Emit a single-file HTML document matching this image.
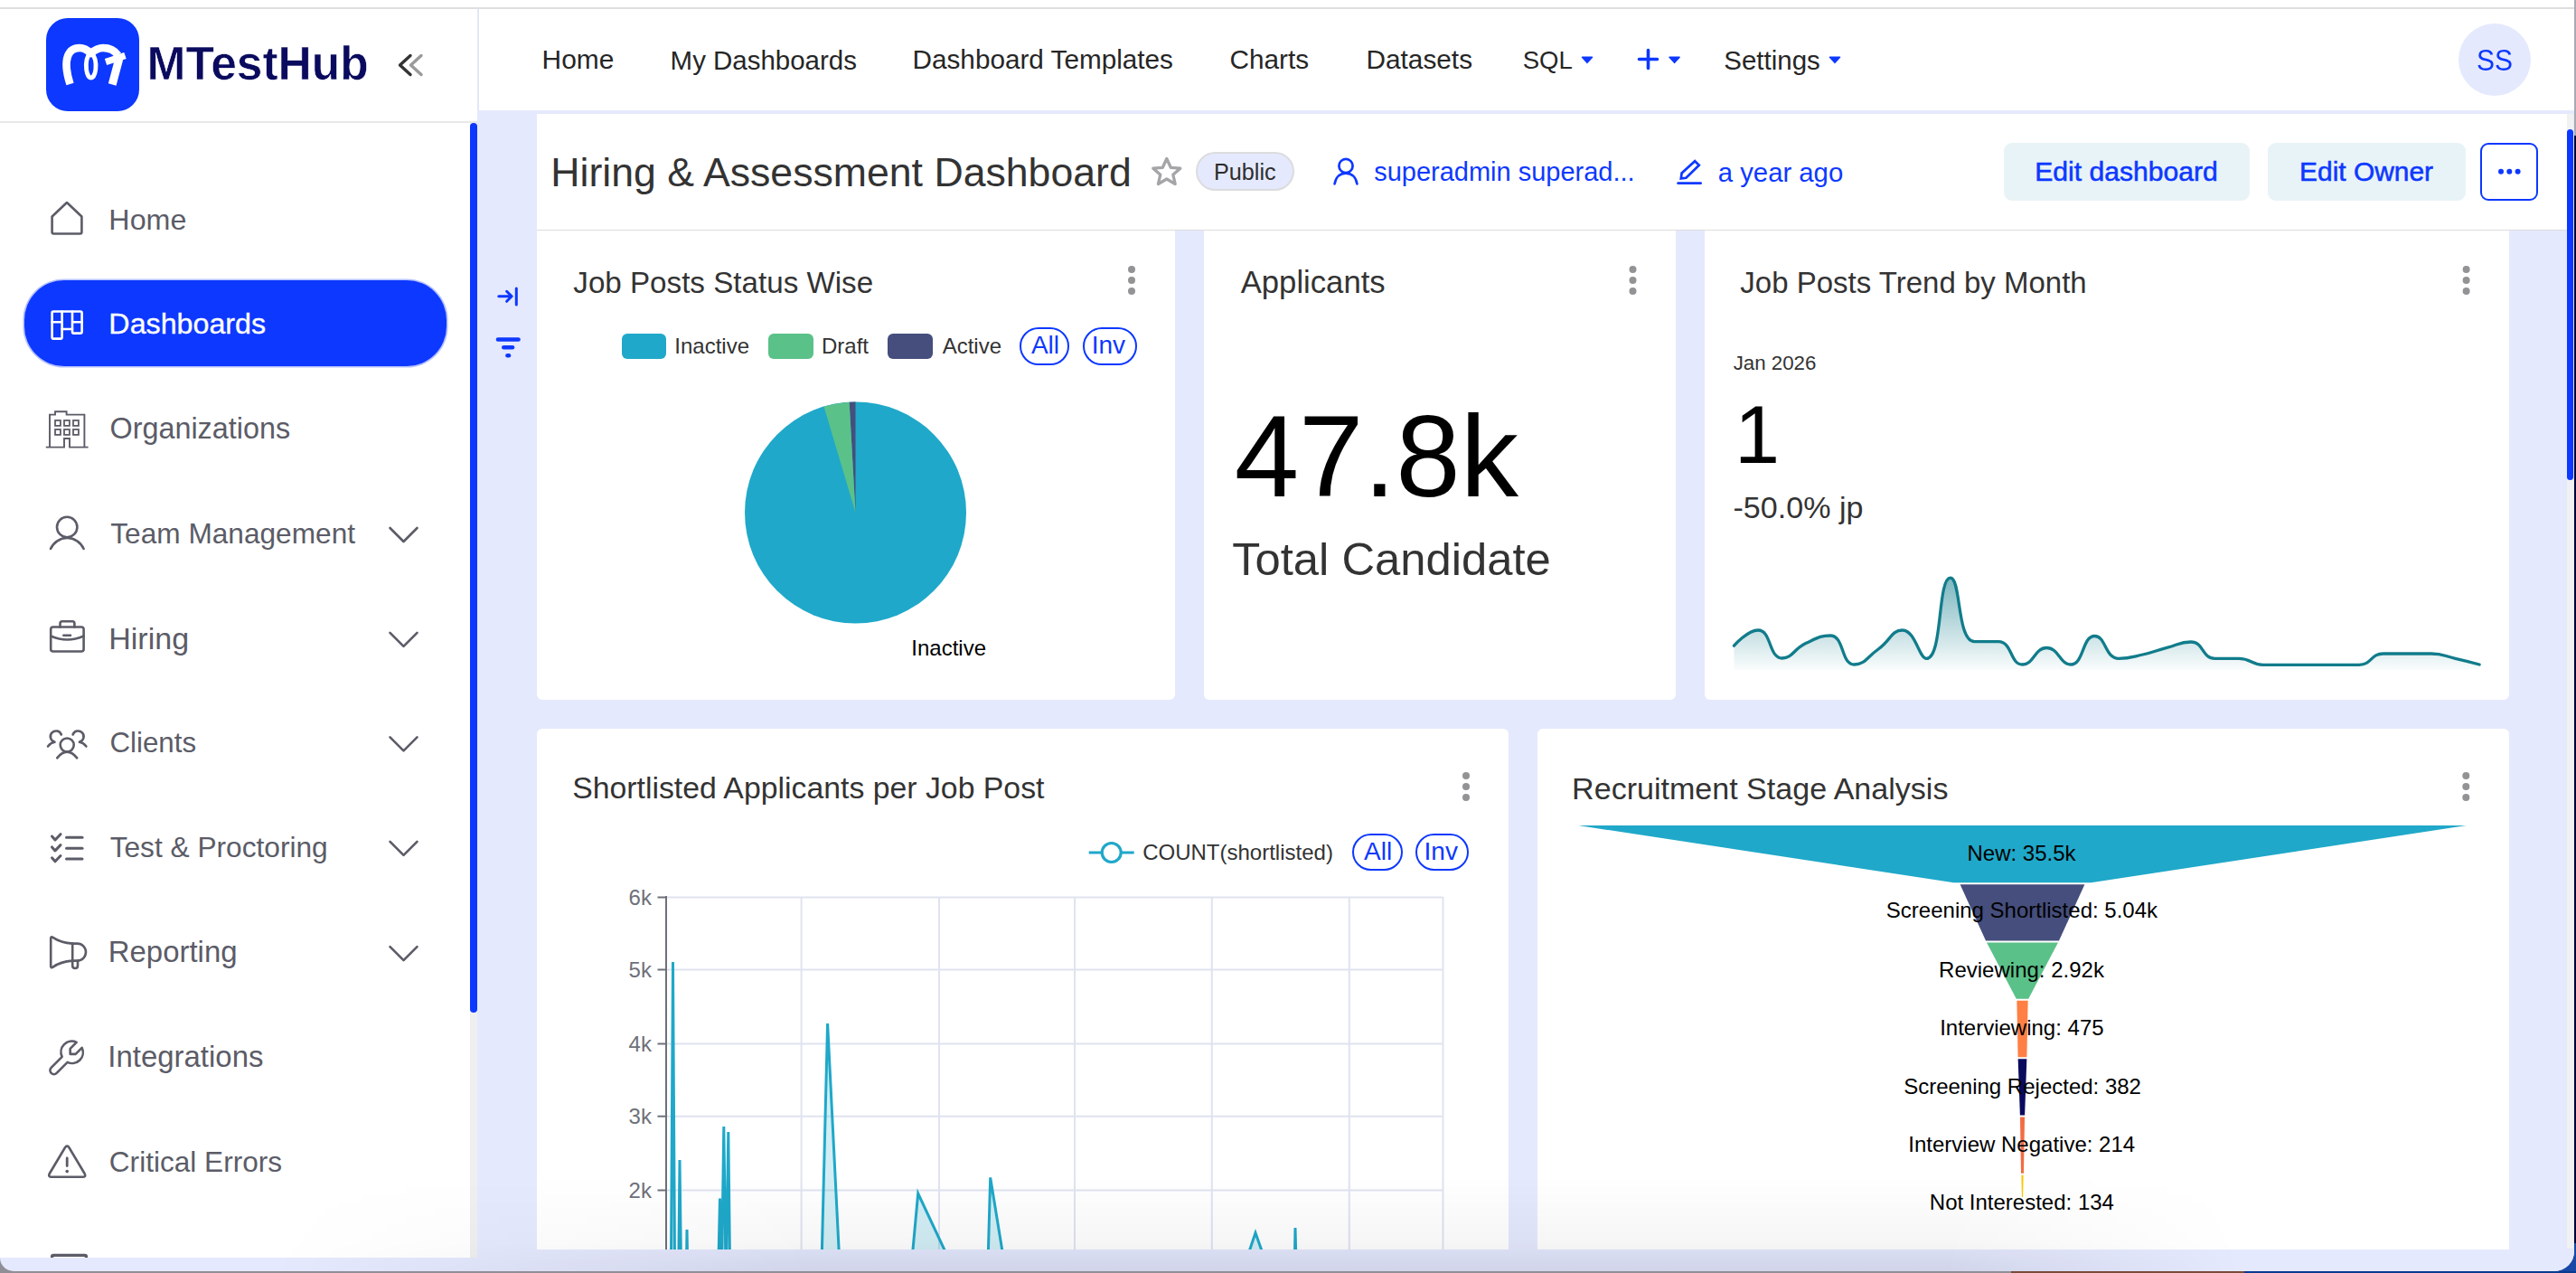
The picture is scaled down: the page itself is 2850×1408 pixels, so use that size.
<!DOCTYPE html>
<html><head><meta charset="utf-8"><style>
html,body{margin:0;padding:0;}
body{width:2850px;height:1408px;position:relative;overflow:hidden;background:#8f8f96;font-family:"Liberation Sans",sans-serif;}
.r{position:absolute;box-sizing:border-box;}
.t{position:absolute;white-space:pre;}
svg{position:absolute;left:0;top:0;}
</style></head><body>
<div class="r" style="left:2848px;top:0px;width:2px;height:150px;background:#a9a9b3;"></div>
<div class="r" style="left:2848px;top:150px;width:2px;height:1225px;background:#000033;"></div>
<div class="r" style="left:2800px;top:1375px;width:50px;height:33px;background:#1848a6;"></div>
<div class="r" style="left:0px;top:1406px;width:2850px;height:2px;background:#8f8f96;"></div>
<div class="r" style="left:0px;top:0px;width:2848px;height:1406px;background:#ffffff;border-radius:0 0 22px 22px;"></div>
<div class="r" style="left:528px;top:122px;width:2320px;height:1284px;background:#e5e9fd;border-radius:0 0 22px 0;"></div>
<div class="r" style="left:0px;top:1391px;width:600px;height:15px;background:#e5e9fd;border-radius:0 0 0 22px;"></div>
<div class="r" style="left:2225px;top:1406px;width:258px;height:2px;background:#7a4a3a;"></div>
<div class="r" style="left:2483px;top:1406px;width:367px;height:2px;background:#0a3a8f;"></div>
<div class="r" style="left:0px;top:8px;width:2848px;height:2px;background:#dedede;"></div>
<div class="r" style="left:530px;top:10px;width:2318px;height:112px;background:#ffffff;"></div>
<div class="r" style="left:528px;top:10px;width:2px;height:112px;background:#e2e6f8;"></div>
<div class="r" style="left:0px;top:10px;width:528px;height:1381px;background:#ffffff;"></div>
<div class="r" style="left:0px;top:134px;width:528px;height:2px;background:#e8e8e8;"></div>
<div class="r" style="left:520px;top:136px;width:8px;height:1255px;background:#efefef;"></div>
<div class="r" style="left:520px;top:136px;width:8px;height:984px;background:#0d38ff;border-radius:4px;"></div>
<div class="r" style="left:594px;top:126px;width:2246px;height:128px;background:#ffffff;"></div>
<div class="r" style="left:594px;top:254px;width:2246px;height:1px;background:#dcdcdc;"></div>
<div class="r" style="left:2840px;top:126px;width:7px;height:1255px;background:#f1f1f1;"></div>
<div class="r" style="left:2840px;top:143px;width:7px;height:388px;background:#0d38ff;border-radius:4px;"></div>
<div class="r" style="left:594px;top:255px;width:706px;height:519px;background:#fff;border-radius:0 0 6px 6px;"></div>
<div class="r" style="left:1332px;top:255px;width:522px;height:519px;background:#fff;border-radius:0 0 6px 6px;"></div>
<div class="r" style="left:1886px;top:255px;width:890px;height:519px;background:#fff;border-radius:0 0 6px 6px;"></div>
<div class="r" style="left:594px;top:806px;width:1075px;height:576px;background:#fff;border-radius:6px 6px 0 0;"></div>
<div class="r" style="left:1701px;top:806px;width:1075px;height:576px;background:#fff;border-radius:6px 6px 0 0;"></div>
<div class="r" style="left:51px;top:20px;width:103px;height:103px;background:#0d38ff;border-radius:24px;"></div>
<div class="r" style="left:27px;top:310px;width:466.5px;height:95px;background:#0d38ff;border-radius:44px;box-shadow:0 0 0 1.6px #b4c0ff;"></div>
<div class="r" style="left:2720px;top:26px;width:80px;height:80px;border-radius:40px;background:#e5e9fd"></div>
<div class="r" style="left:1323.4px;top:168.4px;width:109px;height:43px;border-radius:22px;background:#e5e9fd;border:2px solid #dcdcde"></div>
<div class="r" style="left:2217px;top:158px;width:272px;height:63.5px;background:#e8f3f7;border-radius:9px;"></div>
<div class="r" style="left:2509px;top:158px;width:219px;height:63.5px;background:#e8f3f7;border-radius:9px;"></div>
<div class="r" style="left:2744px;top:158px;width:63.6px;height:63.5px;border-radius:9px;border:2px solid #0d38ff"></div>
<div class="r" style="left:688px;top:369px;width:49px;height:28px;background:#1fa8c9;border-radius:6px;"></div>
<div class="r" style="left:850px;top:369px;width:50px;height:28px;background:#5ac189;border-radius:6px;"></div>
<div class="r" style="left:982px;top:369px;width:50px;height:28px;background:#454e7c;border-radius:6px;"></div>
<div class="r" style="left:1128px;top:362.4px;width:55.200000000000045px;height:41.80000000000001px;border-radius:20.900000000000006px;border:2px solid #0d38ff;box-sizing:border-box"></div>
<div class="r" style="left:1197.8px;top:362.4px;width:59.799999999999955px;height:41.80000000000001px;border-radius:20.900000000000006px;border:2px solid #0d38ff;box-sizing:border-box"></div>
<div class="r" style="left:1496px;top:922.4px;width:55.5px;height:41.0px;border-radius:20.5px;border:2px solid #0d38ff;box-sizing:border-box"></div>
<div class="r" style="left:1565.6px;top:922.4px;width:59.80000000000018px;height:41.0px;border-radius:20.5px;border:2px solid #0d38ff;box-sizing:border-box"></div>
<svg width="2850" height="1408" viewBox="0 0 2850 1408">
<path d="M431.5,584.0 L446.5,599.0 L461.5,584.0" stroke="#5b5c67" stroke-width="2.6" fill="none" stroke-linecap="round" stroke-linejoin="round"/>
<path d="M431.5,699.9 L446.5,714.9 L461.5,699.9" stroke="#5b5c67" stroke-width="2.6" fill="none" stroke-linecap="round" stroke-linejoin="round"/>
<path d="M431.5,815.3 L446.5,830.3 L461.5,815.3" stroke="#5b5c67" stroke-width="2.6" fill="none" stroke-linecap="round" stroke-linejoin="round"/>
<path d="M431.5,930.9 L446.5,945.9 L461.5,930.9" stroke="#5b5c67" stroke-width="2.6" fill="none" stroke-linecap="round" stroke-linejoin="round"/>
<path d="M431.5,1047.1 L446.5,1062.1 L461.5,1047.1" stroke="#5b5c67" stroke-width="2.6" fill="none" stroke-linecap="round" stroke-linejoin="round"/>
<circle cx="1252" cy="298" r="4.0" fill="#939396"/>
<circle cx="1252" cy="310" r="4.0" fill="#939396"/>
<circle cx="1252" cy="322" r="4.0" fill="#939396"/>
<circle cx="1806.5" cy="298" r="4.0" fill="#939396"/>
<circle cx="1806.5" cy="310" r="4.0" fill="#939396"/>
<circle cx="1806.5" cy="322" r="4.0" fill="#939396"/>
<circle cx="2728.6" cy="298" r="4.0" fill="#939396"/>
<circle cx="2728.6" cy="310" r="4.0" fill="#939396"/>
<circle cx="2728.6" cy="322" r="4.0" fill="#939396"/>
<circle cx="1622" cy="858" r="4.0" fill="#939396"/>
<circle cx="1622" cy="870" r="4.0" fill="#939396"/>
<circle cx="1622" cy="882" r="4.0" fill="#939396"/>
<circle cx="2728.3" cy="858" r="4.0" fill="#939396"/>
<circle cx="2728.3" cy="870" r="4.0" fill="#939396"/>
<circle cx="2728.3" cy="882" r="4.0" fill="#939396"/>
<circle cx="946.5" cy="567" r="122.5" fill="#1fa8c9"/>
<path d="M946.5,567 L939.66,444.69 A122.5,122.5 0 0 1 946.50,444.50 Z" fill="#454e7c"/>
<path d="M946.5,567 L911.50,449.61 A122.5,122.5 0 0 1 939.66,444.69 Z" fill="#5ac189"/>
<defs><linearGradient id="tg" x1="0" y1="639" x2="0" y2="741" gradientUnits="userSpaceOnUse"><stop offset="0" stop-color="#117c8b" stop-opacity="0.55"/><stop offset="1" stop-color="#117c8b" stop-opacity="0.02"/></linearGradient></defs>
<path d="M1918.50,714.20 C1918.50,714.20 1933.48,697.00 1945.10,697.00 C1960.08,697.00 1956.66,728.00 1971.70,728.00 C1983.26,728.00 1984.21,717.92 1998.30,711.30 C2010.81,705.42 2014.23,703.00 2024.90,703.00 C2040.83,703.00 2036.37,735.00 2051.50,735.00 C2062.97,735.00 2065.27,727.16 2078.10,718.00 C2091.87,708.16 2092.69,697.00 2104.70,697.00 C2119.29,697.00 2123.15,728.40 2131.30,728.40 C2149.75,728.40 2143.20,639.20 2157.90,639.20 C2169.80,639.20 2164.84,709.70 2184.50,709.70 C2191.44,709.70 2199.92,709.70 2211.10,709.70 C2226.52,709.70 2223.57,735.00 2237.70,735.00 C2250.17,735.00 2251.00,716.50 2264.30,716.50 C2277.60,716.50 2279.19,735.00 2290.90,735.00 C2305.79,735.00 2303.37,703.50 2317.50,703.50 C2329.97,703.50 2328.82,728.30 2344.10,728.30 C2355.42,728.30 2357.58,726.94 2370.70,724.00 C2384.18,720.99 2383.93,719.92 2397.30,716.40 C2410.53,712.92 2411.70,710.00 2423.90,710.00 C2438.30,710.00 2435.92,728.30 2450.50,728.30 C2462.52,728.30 2464.02,728.30 2477.10,728.30 C2490.62,728.30 2490.18,735.30 2503.70,735.30 C2516.78,735.30 2517.00,735.30 2530.30,735.30 C2543.60,735.30 2543.60,735.30 2556.90,735.30 C2570.20,735.30 2570.20,735.30 2583.50,735.30 C2596.80,735.30 2597.44,735.30 2610.10,735.30 C2624.04,735.30 2622.76,723.00 2636.70,723.00 C2649.36,723.00 2650.00,723.00 2663.30,723.00 C2676.60,723.00 2676.73,723.00 2689.90,723.00 C2703.33,723.00 2703.28,725.32 2716.50,728.30 C2729.88,731.32 2743.10,735.00 2743.10,735.00 L2743.1,741 L1918.5,741 Z" fill="url(#tg)"/>
<path d="M1918.50,714.20 C1918.50,714.20 1933.48,697.00 1945.10,697.00 C1960.08,697.00 1956.66,728.00 1971.70,728.00 C1983.26,728.00 1984.21,717.92 1998.30,711.30 C2010.81,705.42 2014.23,703.00 2024.90,703.00 C2040.83,703.00 2036.37,735.00 2051.50,735.00 C2062.97,735.00 2065.27,727.16 2078.10,718.00 C2091.87,708.16 2092.69,697.00 2104.70,697.00 C2119.29,697.00 2123.15,728.40 2131.30,728.40 C2149.75,728.40 2143.20,639.20 2157.90,639.20 C2169.80,639.20 2164.84,709.70 2184.50,709.70 C2191.44,709.70 2199.92,709.70 2211.10,709.70 C2226.52,709.70 2223.57,735.00 2237.70,735.00 C2250.17,735.00 2251.00,716.50 2264.30,716.50 C2277.60,716.50 2279.19,735.00 2290.90,735.00 C2305.79,735.00 2303.37,703.50 2317.50,703.50 C2329.97,703.50 2328.82,728.30 2344.10,728.30 C2355.42,728.30 2357.58,726.94 2370.70,724.00 C2384.18,720.99 2383.93,719.92 2397.30,716.40 C2410.53,712.92 2411.70,710.00 2423.90,710.00 C2438.30,710.00 2435.92,728.30 2450.50,728.30 C2462.52,728.30 2464.02,728.30 2477.10,728.30 C2490.62,728.30 2490.18,735.30 2503.70,735.30 C2516.78,735.30 2517.00,735.30 2530.30,735.30 C2543.60,735.30 2543.60,735.30 2556.90,735.30 C2570.20,735.30 2570.20,735.30 2583.50,735.30 C2596.80,735.30 2597.44,735.30 2610.10,735.30 C2624.04,735.30 2622.76,723.00 2636.70,723.00 C2649.36,723.00 2650.00,723.00 2663.30,723.00 C2676.60,723.00 2676.73,723.00 2689.90,723.00 C2703.33,723.00 2703.28,725.32 2716.50,728.30 C2729.88,731.32 2743.10,735.00 2743.10,735.00" stroke="#117c8b" stroke-width="3.3" fill="none" stroke-linejoin="round" stroke-linecap="round"/>
<path d="M1204.7,943 H1254.7" stroke="#1fa8c9" stroke-width="3"/>
<circle cx="1229.7" cy="943" r="10.5" stroke="#1fa8c9" stroke-width="3.2" fill="#fff"/>
<path d="M737,992.5 H1596.5" stroke="#e0e3f0" stroke-width="2"/>
<path d="M727.5,992.5 H737" stroke="#6e7079" stroke-width="2"/>
<path d="M737,1072.5 H1596.5" stroke="#e0e3f0" stroke-width="2"/>
<path d="M727.5,1072.5 H737" stroke="#6e7079" stroke-width="2"/>
<path d="M737,1154.5 H1596.5" stroke="#e0e3f0" stroke-width="2"/>
<path d="M727.5,1154.5 H737" stroke="#6e7079" stroke-width="2"/>
<path d="M737,1234.7 H1596.5" stroke="#e0e3f0" stroke-width="2"/>
<path d="M727.5,1234.7 H737" stroke="#6e7079" stroke-width="2"/>
<path d="M737,1316.5 H1596.5" stroke="#e0e3f0" stroke-width="2"/>
<path d="M727.5,1316.5 H737" stroke="#6e7079" stroke-width="2"/>
<path d="M886.6,992 V1382" stroke="#e0e3f0" stroke-width="2"/>
<path d="M1039,992 V1382" stroke="#e0e3f0" stroke-width="2"/>
<path d="M1189,992 V1382" stroke="#e0e3f0" stroke-width="2"/>
<path d="M1340.8,992 V1382" stroke="#e0e3f0" stroke-width="2"/>
<path d="M1492.8,992 V1382" stroke="#e0e3f0" stroke-width="2"/>
<path d="M1596.5,992 V1382" stroke="#e0e3f0" stroke-width="2"/>
<path d="M737,991 V1382" stroke="#6e7079" stroke-width="2"/>
<clipPath id="cc"><rect x="737" y="900" width="860" height="482"/></clipPath>
<path d="M737,1480 L742,1480 L744.5,1064 L747,1480 L750,1480 L752,1283 L754.5,1480 L758.5,1480 L760,1360 L762,1480 L793,1480 L796.5,1325.6 L798.3,1420 L800.8,1246 L803.2,1420 L805.8,1252 L808.5,1480 L907,1480 L915.6,1132 L933,1480 L1001,1480 L1015.7,1320 L1090.7,1480 L1095.7,1302.4 L1124.6,1480 L1350,1480 L1389,1363.5 L1430,1480 L1431,1480 L1433,1358 L1436,1480 L1596,1480 Z" fill="#1fa8c9" fill-opacity="0.2" clip-path="url(#cc)"/>
<path d="M737,1480 L742,1480 L744.5,1064 L747,1480 L750,1480 L752,1283 L754.5,1480 L758.5,1480 L760,1360 L762,1480 L793,1480 L796.5,1325.6 L798.3,1420 L800.8,1246 L803.2,1420 L805.8,1252 L808.5,1480 L907,1480 L915.6,1132 L933,1480 L1001,1480 L1015.7,1320 L1090.7,1480 L1095.7,1302.4 L1124.6,1480 L1350,1480 L1389,1363.5 L1430,1480 L1431,1480 L1433,1358 L1436,1480 L1596,1480" stroke="#1fa8c9" stroke-width="3" fill="none" stroke-linejoin="miter" clip-path="url(#cc)"/>
<path d="M1746.25,913.00 L2728.75,913.00 L2313.40,976.29 L2161.60,976.29 Z" fill="#1fa8c9"/>
<path d="M2168.61,978.29 L2306.39,978.29 L2277.96,1040.57 L2197.04,1040.57 Z" fill="#454e7c"/>
<path d="M2198.02,1042.57 L2276.98,1042.57 L2244.20,1104.86 L2230.80,1104.86 Z" fill="#5ac189"/>
<path d="M2231.35,1106.86 L2243.65,1106.86 L2242.41,1169.14 L2232.59,1169.14 Z" fill="#ff7f44"/>
<path d="M2232.65,1171.14 L2242.35,1171.14 L2240.10,1233.43 L2234.90,1233.43 Z" fill="#0b0b5e"/>
<path d="M2234.96,1235.43 L2240.04,1235.43 L2238.97,1297.71 L2236.03,1297.71 Z" fill="#f26c43"/>
<path d="M2236.40,1299.71 L2238.60,1299.71 L2238.10,1324.00 L2236.90,1324.00 Z" fill="#fcc700"/>
<path d="M57.6,239.5 L74,224 L90.4,239.5 V256.8 Q90.4,258.5 88.7,258.5 H59.3 Q57.6,258.5 57.6,256.8 Z" stroke="#5b5c67" stroke-width="2.6" fill="none" stroke-linecap="round" stroke-linejoin="round" />
<path d="M57.6,346 Q57.6,344.5 59,344.5 H89 Q90.6,344.5 90.6,346 V367 Q90.6,368.6 89,368.6 H81.5 Q80,368.6 80,367 V364 H68.6 V373 Q68.6,374.6 67,374.6 H59 Q57.6,374.6 57.6,373 Z" stroke="#ffffff" stroke-width="2.6" fill="none" stroke-linecap="round" stroke-linejoin="round" />
<path d="M68.6,344.5 V364 M80,344.5 V364 M57.6,356.3 H68.6 M80,356.3 H90.6" stroke="#ffffff" stroke-width="2.6" fill="none" stroke-linecap="round" stroke-linejoin="round" />
<path d="M50.8,494.6 H71 V485 H77 V494.6 H97.6 M55,494.6 V458.6 H61 V455.3 H73.6 V458.6 H93.4 V494.6" stroke="#5b5c67" stroke-width="1.9" fill="none" stroke-linecap="butt" stroke-linejoin="miter"/>
<rect x="61" y="465" width="5.9" height="5.9" stroke="#5b5c67" stroke-width="1.8" fill="none"/>
<rect x="61" y="475" width="5.9" height="5.9" stroke="#5b5c67" stroke-width="1.8" fill="none"/>
<rect x="71" y="465" width="5.9" height="5.9" stroke="#5b5c67" stroke-width="1.8" fill="none"/>
<rect x="71" y="475" width="5.9" height="5.9" stroke="#5b5c67" stroke-width="1.8" fill="none"/>
<rect x="81" y="465" width="5.9" height="5.9" stroke="#5b5c67" stroke-width="1.8" fill="none"/>
<rect x="81" y="475" width="5.9" height="5.9" stroke="#5b5c67" stroke-width="1.8" fill="none"/>
<circle cx="74.2" cy="583" r="11.2" stroke="#5b5c67" stroke-width="2.6" fill="none"/>
<path d="M56,607 A20,20 0 0 1 92.6,607" stroke="#5b5c67" stroke-width="2.6" fill="none" stroke-linecap="round" stroke-linejoin="round" />
<path d="M56.2,696 Q56.2,693.5 58.7,693.5 H90 Q92.6,693.5 92.6,696 V718 Q92.6,720.5 90,720.5 H58.7 Q56.2,720.5 56.2,718 Z" stroke="#5b5c67" stroke-width="2.6" fill="none" stroke-linecap="round" stroke-linejoin="round" />
<path d="M66.5,693.5 V689.5 Q66.5,687.3 68.7,687.3 H80.2 Q82.4,687.3 82.4,689.5 V693.5" stroke="#5b5c67" stroke-width="2.6" fill="none" stroke-linecap="round" stroke-linejoin="round" />
<path d="M56.2,703.5 Q74.4,711.5 92.6,703.5" stroke="#5b5c67" stroke-width="2.6" fill="none" stroke-linecap="round" stroke-linejoin="round" />
<path d="M70.3,702.8 H78" stroke="#5b5c67" stroke-width="2.6" fill="none" stroke-linecap="round" stroke-linejoin="round" />
<circle cx="74.2" cy="824" r="7.5" stroke="#5b5c67" stroke-width="2.6" fill="none"/>
<path d="M63.2,838.3 Q74.2,825 85.2,838.3" stroke="#5b5c67" stroke-width="2.6" fill="none" stroke-linecap="round" stroke-linejoin="round" />
<path d="M67.8,812.5 A6.2,6.2 0 1 0 60.2,820.6 M53,825.5 Q56.5,821.3 60.5,820.8" stroke="#5b5c67" stroke-width="2.6" fill="none" stroke-linecap="round" stroke-linejoin="round" />
<path d="M80.6,812.5 A6.2,6.2 0 1 1 88.2,820.6 M95.4,825.5 Q91.9,821.3 87.9,820.8" stroke="#5b5c67" stroke-width="2.6" fill="none" stroke-linecap="round" stroke-linejoin="round" />
<path d="M57.5,925.0 L61,929.0 L67,922.6999999999999" stroke="#5b5c67" stroke-width="3.0" fill="none" stroke-linecap="round" stroke-linejoin="round" />
<path d="M73.5,926.3 H91" stroke="#5b5c67" stroke-width="3.0" fill="none" stroke-linecap="round" stroke-linejoin="round" />
<path d="M57.5,936.9000000000001 L61,940.9000000000001 L67,934.6" stroke="#5b5c67" stroke-width="3.0" fill="none" stroke-linecap="round" stroke-linejoin="round" />
<path d="M73.5,938.2 H91" stroke="#5b5c67" stroke-width="3.0" fill="none" stroke-linecap="round" stroke-linejoin="round" />
<path d="M57.5,948.8000000000001 L61,952.8000000000001 L67,946.5" stroke="#5b5c67" stroke-width="3.0" fill="none" stroke-linecap="round" stroke-linejoin="round" />
<path d="M73.5,950.1 H91" stroke="#5b5c67" stroke-width="3.0" fill="none" stroke-linecap="round" stroke-linejoin="round" />
<path d="M56.2,1038 Q56.2,1035.5 58.5,1036.8 Q67,1042.5 80.2,1043.6 H85.5 A9.5,9.5 0 0 1 85.5,1062.6 H80.2 Q67,1063.5 58.5,1069.6 Q56.2,1071 56.2,1068.4 Z" stroke="#5b5c67" stroke-width="2.6" fill="none" stroke-linecap="round" stroke-linejoin="round" />
<path d="M80.2,1043.6 V1062.6 M80.2,1062.6 V1068 Q80.2,1071 83.2,1071 Q86,1071 86,1068 V1062.6" stroke="#5b5c67" stroke-width="2.6" fill="none" stroke-linecap="round" stroke-linejoin="round" />
<g transform="translate(97.66,1145.84) scale(-2.0,2.0)"><path d="M7 10h3v-3l-3.5 -3.5a6 6 0 0 1 8 8l6 6a2 2 0 0 1 -3 3l-6 -6a6 6 0 0 1 -8 -8l3.5 3.5" stroke="#5b5c67" stroke-width="1.3" fill="none" stroke-linecap="round" stroke-linejoin="round"/></g>
<path d="M71.8,1269.5 Q74.2,1265.8 76.6,1269.5 L93.6,1298 Q95.5,1301.8 91.5,1301.8 H57 Q53,1301.8 54.8,1298 Z" stroke="#5b5c67" stroke-width="2.6" fill="none" stroke-linecap="round" stroke-linejoin="round" />
<path d="M74.2,1281 V1289.5" stroke="#5b5c67" stroke-width="2.8" fill="none" stroke-linecap="round" stroke-linejoin="round" />
<circle cx="74.2" cy="1295.6" r="1.8" fill="#5b5c67"/>
<clipPath id="sbc"><rect x="0" y="1300" width="528" height="91"/></clipPath>
<path d="M57.6,1396 V1390 Q57.6,1388.4 59.2,1388.4 H93.8 Q95.4,1388.4 95.4,1390 V1396" stroke="#5b5c67" stroke-width="3.4" fill="none" stroke-linecap="round" stroke-linejoin="round" clip-path="url(#sbc)"/>
<path d="M454,61.5 L442.5,72 L454,82.5" stroke="#333333" stroke-width="3.4" fill="none" stroke-linecap="round" stroke-linejoin="round" />
<path d="M466,61.5 L454.5,72 L466,82.5" stroke="#9a9a9a" stroke-width="3.4" fill="none" stroke-linecap="round" stroke-linejoin="round" />
<path d="M77.5,93 C74,82 72,70 75,62 C78,54 84,53 88,53 C94,53 97.5,56 100.5,59 C104,56 108,53 114,53 C121,53 127,56 130.5,61" stroke="#fff" stroke-width="8.6" fill="none" stroke-linecap="butt" stroke-linejoin="round"/>
<path d="M100.5,57.5 C96.2,62 94.8,70 95.6,77 C96.4,83 98.8,86 100.7,86 C102.6,86 105,83 105.8,77 C106.6,70 105,62 100.5,57.5 Z" stroke="#fff" stroke-width="4.8" fill="none"/>
<path d="M117,68.5 L138.5,61.5" stroke="#fff" stroke-width="7.5" fill="none"/>
<path d="M131.8,65 L124.2,93.5" stroke="#fff" stroke-width="9" fill="none"/>
<path d="M1750.5,63.3 H1761.5 L1756,69.3 Z" fill="#0d38ff" stroke="#0d38ff" stroke-width="1.6" stroke-linejoin="round"/>
<path d="M1847.1,63.3 H1858.1 L1852.6,69.3 Z" fill="#0d38ff" stroke="#0d38ff" stroke-width="1.6" stroke-linejoin="round"/>
<path d="M2024.5,63.3 H2035.5 L2030,69.3 Z" fill="#0d38ff" stroke="#0d38ff" stroke-width="1.6" stroke-linejoin="round"/>
<path d="M1823.5,55.5 V75.5 M1813.5,65.5 H1833.5" stroke="#0d38ff" stroke-width="3.6" fill="none" stroke-linecap="round" stroke-linejoin="round" />
<path d="M1290.8,175.5 L1295.3,185.3 L1305.8,186.2 L1297.8,193.2 L1300.2,203.5 L1290.8,198 L1281.4,203.5 L1283.8,193.2 L1275.8,186.2 L1286.3,185.3 Z" stroke="#a5a5a8" stroke-width="3.3" fill="none" stroke-linejoin="round"/>
<circle cx="1489" cy="183.5" r="7.6" stroke="#0d38ff" stroke-width="2.7" fill="none"/>
<path d="M1476.6,203.4 C1478,195 1483.5,191.6 1489,191.6 C1494.5,191.6 1500,195 1501.4,203.4" stroke="#0d38ff" stroke-width="2.7" fill="none" stroke-linecap="round" stroke-linejoin="round" />
<path d="M1875.2,178.2 L1879.8,182.8 L1865.4,196.8 L1859.8,197.4 L1860.6,191.4 Z" stroke="#0d38ff" stroke-width="2.7" fill="none" stroke-linejoin="miter"/>
<path d="M1856.6,202.7 H1881.6" stroke="#0d38ff" stroke-width="2.8" fill="none" stroke-linecap="round" stroke-linejoin="round" />
<path d="M551.8,327.8 H566 M560.6,322.3 L566.2,327.8 L560.6,333.3 M571.3,319 V337" stroke="#0d38ff" stroke-width="3.0" fill="none" stroke-linecap="round" stroke-linejoin="round" />
<path d="M551,375.5 H573.5" stroke="#0d38ff" stroke-width="4.6" fill="none" stroke-linecap="round" stroke-linejoin="round" />
<path d="M557.3,384.3 H567" stroke="#0d38ff" stroke-width="4.6" fill="none" stroke-linecap="round" stroke-linejoin="round" />
<path d="M561.5,393.2 H563" stroke="#0d38ff" stroke-width="4.6" fill="none" stroke-linecap="round" stroke-linejoin="round" />
<circle cx="2767" cy="189.8" r="3" fill="#0d38ff"/>
<circle cx="2776.3" cy="189.8" r="3" fill="#0d38ff"/>
<circle cx="2785.6" cy="189.8" r="3" fill="#0d38ff"/>
</svg>
<div class="t" style="left:162.60px;top:45.16px;font-size:51.53px;line-height:51.53px;font-weight:700;color:#0a0a5e;-webkit-text-stroke:0.6px #ffffff;">MTestHub</div>
<div class="t" style="left:120.35px;top:226.67px;font-size:32.27px;line-height:32.27px;font-weight:400;color:#5b5c67;">Home</div>
<div class="t" style="left:120.36px;top:341.70px;font-size:32.23px;line-height:32.23px;font-weight:400;color:#ffffff;-webkit-text-stroke:0.35px #ffffff;">Dashboards</div>
<div class="t" style="left:121.48px;top:458.19px;font-size:32.36px;line-height:32.36px;font-weight:400;color:#5b5c67;">Organizations</div>
<div class="t" style="left:122.30px;top:574.71px;font-size:31.63px;line-height:31.63px;font-weight:400;color:#5b5c67;">Team Management</div>
<div class="t" style="left:120.21px;top:688.55px;font-size:34.06px;line-height:34.06px;font-weight:400;color:#5b5c67;">Hiring</div>
<div class="t" style="left:121.43px;top:806.29px;font-size:31.30px;line-height:31.30px;font-weight:400;color:#5b5c67;">Clients</div>
<div class="t" style="left:121.70px;top:921.58px;font-size:31.67px;line-height:31.67px;font-weight:400;color:#5b5c67;">Test &amp; Proctoring</div>
<div class="t" style="left:119.70px;top:1036.68px;font-size:32.96px;line-height:32.96px;font-weight:400;color:#5b5c67;">Reporting</div>
<div class="t" style="left:119.37px;top:1152.80px;font-size:32.93px;line-height:32.93px;font-weight:400;color:#5b5c67;">Integrations</div>
<div class="t" style="left:120.82px;top:1270.04px;font-size:31.59px;line-height:31.59px;font-weight:400;color:#5b5c67;">Critical Errors</div>
<div class="t" style="left:599.55px;top:51.17px;font-size:29.91px;line-height:29.91px;font-weight:400;color:#262626;">Home</div>
<div class="t" style="left:741.58px;top:51.53px;font-size:29.48px;line-height:29.48px;font-weight:400;color:#262626;">My Dashboards</div>
<div class="t" style="left:1009.56px;top:51.33px;font-size:29.71px;line-height:29.71px;font-weight:400;color:#262626;">Dashboard Templates</div>
<div class="t" style="left:1360.51px;top:51.32px;font-size:29.73px;line-height:29.73px;font-weight:400;color:#262626;">Charts</div>
<div class="t" style="left:1511.56px;top:51.28px;font-size:29.78px;line-height:29.78px;font-weight:400;color:#262626;">Datasets</div>
<div class="t" style="left:1684.76px;top:53.16px;font-size:27.56px;line-height:27.56px;font-weight:400;color:#262626;">SQL</div>
<div class="t" style="left:1907.37px;top:51.56px;font-size:29.45px;line-height:29.45px;font-weight:400;color:#262626;">Settings</div>
<div class="t" style="left:2739.99px;top:52.59px;font-size:30.00px;line-height:30.00px;font-weight:400;color:#0d38ff;transform:scaleY(1.1);transform-origin:0 25.41px;">SS</div>
<div class="t" style="left:609.34px;top:168.79px;font-size:44.63px;line-height:44.63px;font-weight:400;color:#333333;">Hiring &amp; Assessment Dashboard</div>
<div class="t" style="left:1342.93px;top:178.03px;font-size:25.23px;line-height:25.23px;font-weight:400;color:#2e2e2e;">Public</div>
<div class="t" style="left:1520.22px;top:176.25px;font-size:28.99px;line-height:28.99px;font-weight:400;color:#0d38ff;">superadmin superad...</div>
<div class="t" style="left:1900.77px;top:175.98px;font-size:29.30px;line-height:29.30px;font-weight:400;color:#0d38ff;">a year ago</div>
<div class="t" style="left:2251.23px;top:174.50px;font-size:30.10px;line-height:30.10px;font-weight:400;color:#0d38ff;-webkit-text-stroke:0.55px #0d38ff;">Edit dashboard</div>
<div class="t" style="left:2544.05px;top:174.67px;font-size:29.91px;line-height:29.91px;font-weight:400;color:#0d38ff;-webkit-text-stroke:0.55px #0d38ff;">Edit Owner</div>
<div class="t" style="left:634.30px;top:295.89px;font-size:33.18px;line-height:33.18px;font-weight:400;color:#333333;">Job Posts Status Wise</div>
<div class="t" style="left:1372.73px;top:294.84px;font-size:34.66px;line-height:34.66px;font-weight:400;color:#333333;">Applicants</div>
<div class="t" style="left:1925.30px;top:296.24px;font-size:33.01px;line-height:33.01px;font-weight:400;color:#333333;">Job Posts Trend by Month</div>
<div class="t" style="left:633.18px;top:855.37px;font-size:33.80px;line-height:33.80px;font-weight:400;color:#333333;">Shortlisted Applicants per Job Post</div>
<div class="t" style="left:1739.11px;top:854.96px;font-size:34.05px;line-height:34.05px;font-weight:400;color:#333333;">Recruitment Stage Analysis</div>
<div class="t" style="left:746.29px;top:371.17px;font-size:24.00px;line-height:24.00px;font-weight:400;color:#333333;">Inactive</div>
<div class="t" style="left:909.03px;top:371.17px;font-size:24.00px;line-height:24.00px;font-weight:400;color:#333333;">Draft</div>
<div class="t" style="left:1042.65px;top:371.17px;font-size:24.00px;line-height:24.00px;font-weight:400;color:#333333;">Active</div>
<div class="t" style="left:1140.94px;top:368.18px;font-size:28.00px;line-height:28.00px;font-weight:400;color:#0d38ff;">All</div>
<div class="t" style="left:1207.78px;top:368.18px;font-size:28.00px;line-height:28.00px;font-weight:400;color:#0d38ff;">Inv</div>
<div class="t" style="left:1008.29px;top:704.67px;font-size:24.00px;line-height:24.00px;font-weight:400;color:#000000;">Inactive</div>
<div class="t" style="left:1365.67px;top:440.97px;font-size:128.48px;line-height:128.48px;font-weight:400;color:#000000;">47.8k</div>
<div class="t" style="left:1363.18px;top:593.80px;font-size:50.76px;line-height:50.76px;font-weight:400;color:#333333;">Total Candidate</div>
<div class="t" style="left:1917.67px;top:391.41px;font-size:22.31px;line-height:22.31px;font-weight:400;color:#333333;">Jan 2026</div>
<div class="t" style="left:1918.96px;top:435.77px;font-size:90.00px;line-height:90.00px;font-weight:400;color:#000000;">1</div>
<div class="t" style="left:1917.50px;top:544.35px;font-size:34.07px;line-height:34.07px;font-weight:400;color:#333333;">-50.0% jp</div>
<div class="t" style="left:1264.20px;top:931.17px;font-size:24.00px;line-height:24.00px;font-weight:400;color:#333333;">COUNT(shortlisted)</div>
<div class="t" style="left:1509.09px;top:928.18px;font-size:28.00px;line-height:28.00px;font-weight:400;color:#0d38ff;">All</div>
<div class="t" style="left:1575.58px;top:928.18px;font-size:28.00px;line-height:28.00px;font-weight:400;color:#0d38ff;">Inv</div>
<div class="t" style="left:695.61px;top:980.67px;font-size:24.00px;line-height:24.00px;font-weight:400;color:#6e7079;">6k</div>
<div class="t" style="left:695.61px;top:1060.67px;font-size:24.00px;line-height:24.00px;font-weight:400;color:#6e7079;">5k</div>
<div class="t" style="left:695.61px;top:1142.67px;font-size:24.00px;line-height:24.00px;font-weight:400;color:#6e7079;">4k</div>
<div class="t" style="left:695.61px;top:1222.87px;font-size:24.00px;line-height:24.00px;font-weight:400;color:#6e7079;">3k</div>
<div class="t" style="left:695.61px;top:1304.67px;font-size:24.00px;line-height:24.00px;font-weight:400;color:#6e7079;">2k</div>
<div class="t" style="left:2176.47px;top:932.07px;font-size:24.00px;line-height:24.00px;font-weight:400;color:#000000;">New: 35.5k</div>
<div class="t" style="left:2086.85px;top:995.37px;font-size:24.00px;line-height:24.00px;font-weight:400;color:#000000;">Screening Shortlisted: 5.04k</div>
<div class="t" style="left:2145.11px;top:1060.57px;font-size:24.00px;line-height:24.00px;font-weight:400;color:#000000;">Reviewing: 2.92k</div>
<div class="t" style="left:2146.17px;top:1125.37px;font-size:24.00px;line-height:24.00px;font-weight:400;color:#000000;">Interviewing: 475</div>
<div class="t" style="left:2106.14px;top:1189.87px;font-size:24.00px;line-height:24.00px;font-weight:400;color:#000000;">Screening Rejected: 382</div>
<div class="t" style="left:2111.34px;top:1253.87px;font-size:24.00px;line-height:24.00px;font-weight:400;color:#000000;">Interview Negative: 214</div>
<div class="t" style="left:2134.80px;top:1317.77px;font-size:24.00px;line-height:24.00px;font-weight:400;color:#000000;">Not Interested: 134</div>
<div style="position:absolute;left:0;top:1300px;width:2848px;height:106px;background:linear-gradient(to bottom, rgba(0,0,30,0) 0%, rgba(0,0,30,0.035) 70%, rgba(0,0,30,0.085) 100%);-webkit-mask-image:linear-gradient(to right, transparent 0px, transparent 300px, #000 900px, #000 2150px, transparent 2480px);border-radius:0 0 22px 22px;"></div>
</body></html>
